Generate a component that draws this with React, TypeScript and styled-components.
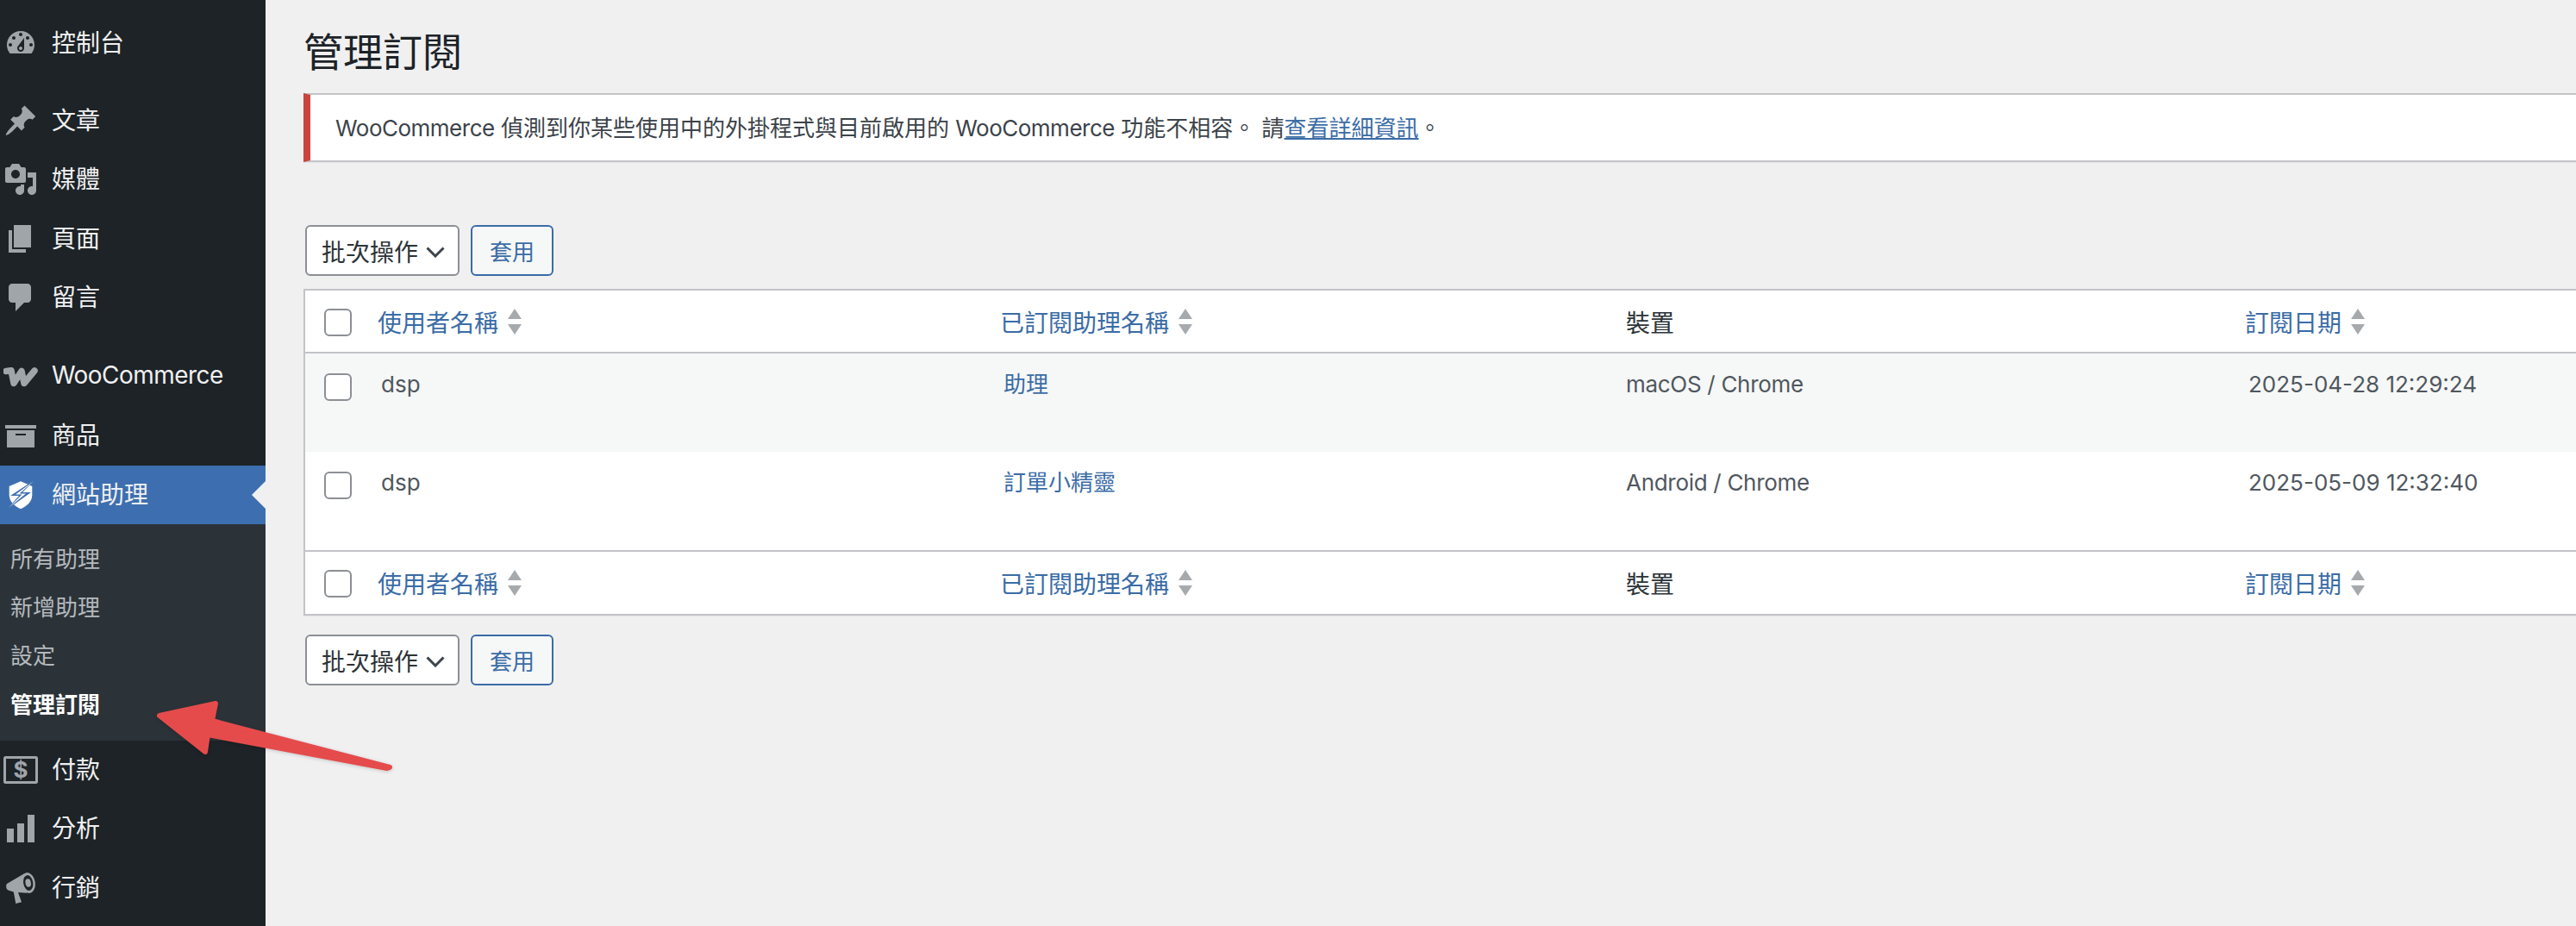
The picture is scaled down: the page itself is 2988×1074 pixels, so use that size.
import React from "react";
import styled, { createGlobalStyle } from "styled-components";

const FONT = `Inter, "Noto Sans CJK TC", sans-serif`;
const LINK = "#3a6ca6";
const ACTIVE = "#3d6fb0";
const MUTED = "#a0a5aa";

const Global = createGlobalStyle`
  html, body { margin: 0; padding: 0; background: #f0f0f1; }
  body { font-family: ${FONT}; overflow: hidden; }
  #root { width: 2988px; height: 1074px; overflow: hidden; }
`;

const Page = styled.div`
  position: relative;
  display: flex;
  width: 2988px;
  height: 1074px;
  overflow: hidden;
  background: #f0f0f1;
`;

const Sidebar = styled.nav`
  flex: 0 0 308px;
  background: #1d2327;
  padding-top: 16px;
  box-sizing: border-box;
`;

const MenuList = styled.div<{ $gap?: number }>`
  margin-bottom: ${(p) => p.$gap ?? 0}px;
`;

const MenuItem = styled.div<{ $active?: boolean }>`
  position: relative;
  display: flex;
  align-items: center;
  height: 68.5px;
  padding-left: 4px;
  gap: 17px;
  font-size: 28px;
  color: #f0f0f1;
  background: ${(p) => (p.$active ? ACTIVE : "transparent")};
  ${(p) =>
    p.$active &&
    `&::after {
      content: "";
      position: absolute;
      right: 0;
      top: 18px;
      border: 16px solid transparent;
      border-right-color: #f0f0f1;
      border-left-width: 0;
    }`}
`;

const MenuLabel = styled.span<{ $latin?: boolean }>`
  padding-bottom: 4px;
  margin-left: -1px;
  letter-spacing: ${(p) => (p.$latin ? "-0.55px" : "0")};
`;

const IconBox = styled.svg<{ $active?: boolean }>`
  flex: 0 0 40px;
  width: 40px;
  height: 40px;
  fill: ${(p) => (p.$active ? "#ffffff" : MUTED)};
`;

const SubMenu = styled.div`
  background: #2c3338;
  padding: 10px 0 15px 12px;
`;

const SubItem = styled.div<{ $current?: boolean }>`
  height: 56.4px;
  display: flex;
  align-items: center;
  font-size: 26px;
  font-weight: ${(p) => (p.$current ? 700 : 400)};
  color: ${(p) => (p.$current ? "#ffffff" : "#b4b9be")};
`;

const Main = styled.main`
  flex: 0 0 2720px;
  padding: 32px 0 0 44px;
  box-sizing: border-box;
`;

const Title = styled.h1`
  margin: 0 0 20px 0;
  font-size: 46px;
  font-weight: 400;
  line-height: 56px;
  color: #1d2327;
`;

const Notice = styled.div`
  height: 80px;
  box-sizing: border-box;
  display: flex;
  align-items: center;
  padding: 0 0 3px 29px;
  background: #fff;
  border: 2px solid #c3c4c7;
  border-left: 8px solid #c9443b;
  border-right: 0;
  font-size: 26px;
  color: #3c434a;
  box-shadow: 0 1px 1px rgba(0, 0, 0, 0.04);
`;

const Latin = styled.span`
  letter-spacing: -0.5px;
`;

const Link = styled.a`
  color: ${LINK};
  text-decoration: underline;
`;

const Actions = styled.div<{ $top: number; $bottom: number }>`
  display: flex;
  gap: 13px;
  margin: ${(p) => p.$top}px 0 ${(p) => p.$bottom}px 2px;
`;

const BulkSelect = styled.div`
  width: 179px;
  height: 59px;
  box-sizing: border-box;
  border: 2px solid #8c8f94;
  border-radius: 6px;
  background: #fff;
  display: flex;
  align-items: center;
  justify-content: space-between;
  padding: 0 15px 0 17px;
  font-size: 28px;
  color: #2c3338;
`;

const Chevron = styled.svg`
  width: 22px;
  height: 14px;
  margin-top: 2px;
  fill: none;
  stroke: #3c434a;
  stroke-width: 3;
`;

const ApplyButton = styled.button`
  width: 96px;
  height: 59px;
  box-sizing: border-box;
  border: 2px solid ${LINK};
  border-radius: 6px;
  background: #f6f7f7;
  color: ${LINK};
  font-family: ${FONT};
  font-size: 26px;
  padding: 0;
`;

const Table = styled.table`
  width: 2680px;
  table-layout: fixed;
  border-collapse: separate;
  border-spacing: 0;
  background: #fff;
  border: 2px solid #c3c4c7;
  border-right: 0;
  box-shadow: 0 1px 1px rgba(0, 0, 0, 0.04);
`;

const Head = styled.th<{ $top?: boolean; $pad?: number }>`
  height: ${(p) => (p.$top ? 73 : 74)}px;
  box-sizing: border-box;
  padding: 0 0 0 ${(p) => p.$pad ?? 22}px;
  font-size: 28px;
  font-weight: 400;
  text-align: left;
  color: #2c3338;
  ${(p) => (p.$top ? "border-bottom: 2px solid #c3c4c7;" : "border-top: 2px solid #c3c4c7;")}
`;

const SortLink = styled.a`
  display: inline-flex;
  align-items: center;
  gap: 11px;
  color: ${LINK};
`;

const SortArrows = styled.svg`
  width: 16px;
  height: 30px;
  fill: #a7aaad;
`;

const Check = styled.span<{ $offset?: number }>`
  display: block;
  width: 32px;
  height: 32px;
  margin-top: ${(p) => p.$offset ?? 0}px;
  box-sizing: border-box;
  border: 2px solid #8c8f94;
  border-radius: 6px;
  background: #fff;
`;

const Row = styled.tr<{ $alt?: boolean }>`
  background: ${(p) => (p.$alt ? "#f6f7f7" : "#fff")};
`;

const Cell = styled.td<{ $tight?: boolean }>`
  height: 114px;
  box-sizing: border-box;
  padding: 17px 0 0 22px;
  vertical-align: top;
  font-size: 26px;
  line-height: 38px;
  letter-spacing: ${(p) => (p.$tight ? "-0.3px" : "0")};
  color: #50575e;
`;

const CheckCell = styled(Cell)`
  padding-top: 23px;
`;

const CellLink = styled.a`
  color: ${LINK};
`;

const ArrowOverlay = styled.svg`
  position: absolute;
  left: 0;
  top: 0;
  width: 2988px;
  height: 1074px;
  pointer-events: none;
  filter: drop-shadow(0 1px 2px rgba(0, 0, 0, 0.18));
`;

const Icon = ({ d }: { d: string }) => (
  <IconBox viewBox="0 0 20 20">
    <path d={d} fillRule="evenodd" />
  </IconBox>
);

const ICONS = {
  dashboard:
    "M3.76 16h12.48c1.1-1.37 1.76-3.11 1.76-5 0-4.42-3.58-8-8-8s-8 3.58-8 8c0 1.89.66 3.63 1.76 5zM10 4c.55 0 1 .45 1 1s-.45 1-1 1-1-.45-1-1 .45-1 1-1zM6 6c.55 0 1 .45 1 1s-.45 1-1 1-1-.45-1-1 .45-1 1-1zm8 0c.55 0 1 .45 1 1s-.45 1-1 1-1-.45-1-1 .45-1 1-1zm-5.37 5.55L12 7v6c0 1.1-.9 2-2 2s-2-.9-2-2c0-.57.24-1.08.63-1.45zM4 10c.55 0 1 .45 1 1s-.45 1-1 1-1-.45-1-1 .45-1 1-1zm12 0c.55 0 1 .45 1 1s-.45 1-1 1-1-.45-1-1 .45-1 1-1zm-5 3c0-.55-.45-1-1-1s-1 .45-1 1 .45 1 1 1 1-.45 1-1z",
  post:
    "M10.44 3.02l1.82-1.82 6.36 6.35-1.83 1.82c-1.05-.68-2.48-.57-3.41.36l-.75.75c-.92.93-1.04 2.35-.35 3.41l-1.83 1.82-2.41-2.41-2.8 2.79c-.42.42-3.38 2.71-3.8 2.29s1.86-3.39 2.28-3.81l2.79-2.79L4.1 9.36l1.83-1.82c1.05.69 2.48.57 3.4-.36l.75-.75c.93-.92 1.05-2.35.36-3.41z",
  media:
    "M13 11V4c0-.55-.45-1-1-1h-1.67L9 1H5L3.67 3H2c-.55 0-1 .45-1 1v7c0 .55.45 1 1 1h10c.55 0 1-.45 1-1zM7 4.5c1.38 0 2.5 1.12 2.5 2.5S8.38 9.5 7 9.5 4.5 8.38 4.5 7 5.62 4.5 7 4.5zM14 6h5v10.5c0 1.38-1.12 2.5-2.5 2.5S14 17.88 14 16.5s1.12-2.5 2.5-2.5c.17 0 .34.02.5.05V9h-3V6zm-4 8.05V13h2v3.5c0 1.38-1.12 2.5-2.5 2.5S7 17.88 7 16.5 8.12 14 9.5 14c.17 0 .34.02.5.05z",
  page: "M6 15V2h10v13H6zm-1 1h8v2H3V5h2v11z",
  comments:
    "M5 2h9c1.1 0 2 .9 2 2v7c0 1.1-.9 2-2 2h-2l-5 5v-5H5c-1.1 0-2-.9-2-2V4c0-1.1.9-2 2-2z",
  archive: "M19 4v2H1V4h18zM2 7h16v10H2V7zm11 3V9H7v1h6z",
};

const WooIcon = () => (
  <IconBox viewBox="0 0 40 40">
    <path
      d="M3 13.500L9 12.800 12 27.500 21 13.500 24 27.500 36 13"
      fill="none"
      stroke={MUTED}
      strokeWidth="7.500"
      strokeLinejoin="round"
      strokeLinecap="round"
    />
  </IconBox>
);

const ShieldIcon = () => (
  <IconBox viewBox="0 0 40 40" $active>
    <path d="M20 4.300L33.300 10V20C33.300 28 27 33 20 36.300 13 33 6.700 28 6.700 20V10z" />
    <path d="M37 2L8 21H18L4 37 32 17H22z" fill={ACTIVE} />
    <path d="M35 4L14 19.500H21.500L6 35 26 18.500H18.500z" fill="#fff" />
  </IconBox>
);

const MoneyIcon = () => (
  <IconBox viewBox="0 0 40 40">
    <path
      fillRule="evenodd"
      d="M2.500 4h35a2.500 2.500 0 0 1 2.500 2.500v27a2.500 2.500 0 0 1-2.500 2.500h-35A2.500 2.500 0 0 1 0 33.500v-27A2.500 2.500 0 0 1 2.500 4zm.5 3v26h34V7z"
    />
    <text x="20" y="29" fontSize="26" fontWeight="700" textAnchor="middle" fontFamily="Inter, sans-serif">
      $
    </text>
  </IconBox>
);

const BarsIcon = () => (
  <IconBox viewBox="0 0 40 40">
    <rect x="4" y="20" width="8" height="16" />
    <rect x="16" y="14" width="8" height="22" />
    <rect x="28" y="4" width="8" height="32" />
  </IconBox>
);

const MegaphoneIcon = () => (
  <IconBox viewBox="0 0 40 40">
    <path d="M4 15L24.500 3 27 25.800 17 25 21 36.300 14.300 38 11.800 24.500 5.500 22.500C3 21.500 2.500 17 4 15z" />
    <ellipse cx="28.700" cy="14" rx="8" ry="12" transform="rotate(-10 28.700 14)" />
    <ellipse cx="28.700" cy="14" rx="5.500" ry="9" transform="rotate(-10 28.700 14)" fill="#1d2327" />
    <ellipse cx="28.700" cy="14" rx="3.200" ry="4.800" transform="rotate(-10 28.700 14)" />
  </IconBox>
);

const SortIcon = () => (
  <SortArrows viewBox="0 0 16 30">
    <path d="M8 0l8 12H0z" />
    <path d="M8 30L0 18h16z" />
  </SortArrows>
);

const BulkBar = ({ top, bottom }: { top: number; bottom: number }) => (
  <Actions $top={top} $bottom={bottom}>
    <BulkSelect>
      批次操作
      <Chevron viewBox="0 0 22 14">
        <path d="M1.500 2.500L11 12 20.500 2.500" />
      </Chevron>
    </BulkSelect>
    <ApplyButton>套用</ApplyButton>
  </Actions>
);

const HeaderCells = ({ top }: { top?: boolean }) => (
  <tr>
    <Head $top={top}>
      <Check $offset={2} />
    </Head>
    <Head $top={top} $pad={18}>
      <SortLink>
        使用者名稱
        <SortIcon />
      </SortLink>
    </Head>
    <Head $top={top} $pad={18}>
      <SortLink>
        已訂閱助理名稱
        <SortIcon />
      </SortLink>
    </Head>
    <Head $top={top}>裝置</Head>
    <Head $top={top} $pad={18}>
      <SortLink>
        訂閱日期
        <SortIcon />
      </SortLink>
    </Head>
  </tr>
);

const ROWS = [
  { user: "dsp", bot: "助理", device: "macOS / Chrome", date: "2025-04-28 12:29:24" },
  { user: "dsp", bot: "訂單小精靈", device: "Android / Chrome", date: "2025-05-09 12:32:40" },
];

export default function App() {
  return (
    <Page>
      <Global />
      <Sidebar>
        <MenuList $gap={21}>
          <MenuItem>
            <Icon d={ICONS.dashboard} />
            <MenuLabel>控制台</MenuLabel>
          </MenuItem>
        </MenuList>
        <MenuList $gap={23}>
          <MenuItem>
            <Icon d={ICONS.post} />
            <MenuLabel>文章</MenuLabel>
          </MenuItem>
          <MenuItem>
            <Icon d={ICONS.media} />
            <MenuLabel>媒體</MenuLabel>
          </MenuItem>
          <MenuItem>
            <Icon d={ICONS.page} />
            <MenuLabel>頁面</MenuLabel>
          </MenuItem>
          <MenuItem>
            <Icon d={ICONS.comments} />
            <MenuLabel>留言</MenuLabel>
          </MenuItem>
        </MenuList>
        <MenuList>
          <MenuItem>
            <WooIcon />
            <MenuLabel $latin>WooCommerce</MenuLabel>
          </MenuItem>
          <MenuItem>
            <Icon d={ICONS.archive} />
            <MenuLabel>商品</MenuLabel>
          </MenuItem>
          <MenuItem $active>
            <ShieldIcon />
            <MenuLabel>網站助理</MenuLabel>
          </MenuItem>
          <SubMenu>
            <SubItem>所有助理</SubItem>
            <SubItem>新增助理</SubItem>
            <SubItem>設定</SubItem>
            <SubItem $current>管理訂閱</SubItem>
          </SubMenu>
          <MenuItem>
            <MoneyIcon />
            <MenuLabel>付款</MenuLabel>
          </MenuItem>
          <MenuItem>
            <BarsIcon />
            <MenuLabel>分析</MenuLabel>
          </MenuItem>
          <MenuItem>
            <MegaphoneIcon />
            <MenuLabel>行銷</MenuLabel>
          </MenuItem>
        </MenuList>
      </Sidebar>
      <Main>
        <Title>管理訂閱</Title>
        <Notice>
          <span>
            <Latin>WooCommerce</Latin> 偵測到你某些使用中的外掛程式與目前啟用的 <Latin>WooCommerce</Latin> 功能不相容。 請
            <Link>查看詳細資訊</Link>。
          </span>
        </Notice>
        <BulkBar top={73} bottom={15} />
        <Table>
          <colgroup>
            <col width={66} />
            <col width={722} />
            <col width={722} />
            <col width={722} />
            <col />
          </colgroup>
          <thead>
            <HeaderCells top />
          </thead>
          <tbody>
            {ROWS.map((r, i) => (
              <Row key={r.bot} $alt={i === 0}>
                <CheckCell>
                  <Check />
                </CheckCell>
                <Cell>{r.user}</Cell>
                <Cell>
                  <CellLink>{r.bot}</CellLink>
                </Cell>
                <Cell $tight>{r.device}</Cell>
                <Cell>{r.date}</Cell>
              </Row>
            ))}
          </tbody>
          <tfoot>
            <HeaderCells />
          </tfoot>
        </Table>
        <BulkBar top={22} bottom={0} />
      </Main>
      <ArrowOverlay viewBox="0 0 2988 1074">
        <path
          d="M185 830L250 816 246 836 452 890 449 891 241 852 238 872z"
          fill="#e54b4b"
          stroke="#e54b4b"
          strokeWidth="6"
          strokeLinejoin="round"
        />
      </ArrowOverlay>
    </Page>
  );
}
